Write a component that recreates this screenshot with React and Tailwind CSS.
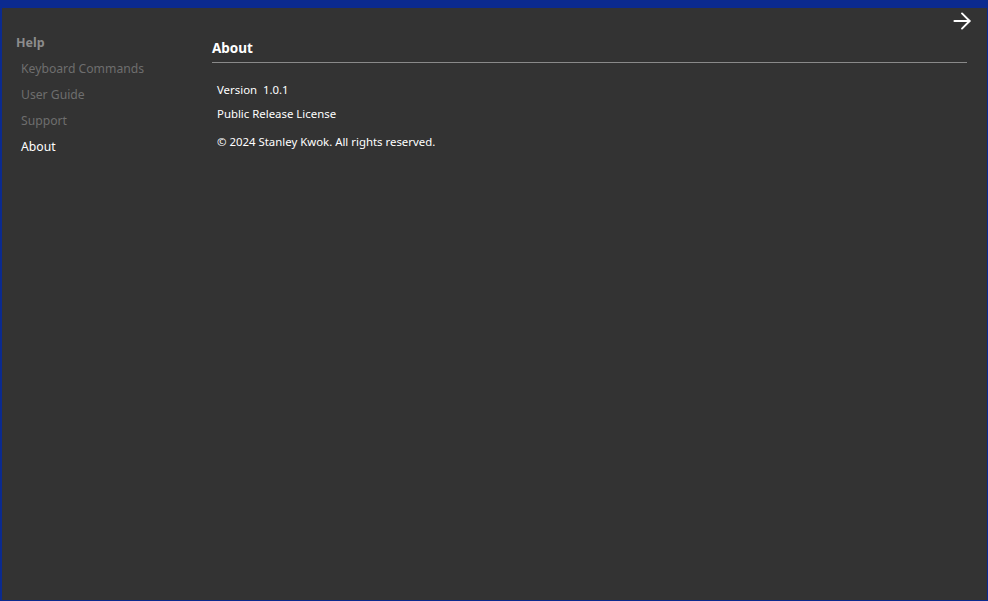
import React from 'react';
import { ArrowRight } from 'lucide-react';

export default function App() {
    const navItems = ["Keyboard Commands", "User Guide", "Support", "About"];
    const active = "About";

    return (
        <div className="w-[988px] h-[601px] bg-[#0b2a8f] pt-2 pl-[2px] pr-px pb-px" style={{ fontFamily: '"Segoe UI", "Noto Sans", sans-serif' }}>
            <div className="relative flex w-full h-full bg-[#333333]">
                {/* Close arrow */}
                <button className="absolute top-0 right-[12px] text-white">
                    <ArrowRight className="w-[26px] h-[26px]" strokeWidth={1.8} />
                </button>

                {/* Sidebar */}
                <aside className="w-[210px] pl-[14px] pt-[25px] shrink-0">
                    <div className="text-[12.5px] font-bold text-[#8c8c8c] leading-[20px]">Help</div>
                    <ul className="mt-[3px] pl-[5px] flex flex-col">
                        {navItems.map((item) => (
                            <li
                                key={item}
                                className={`text-[12.2px] leading-[26px] ${item === active ? 'text-white' : 'text-[#6e6e6e]'}`}
                            >
                                {item}
                            </li>
                        ))}
                    </ul>
                </aside>

                {/* Content */}
                <main className="flex-1 pt-[30px] pr-[20px]">
                    <h2 className="text-[13.5px] font-bold text-white leading-[20px]">About</h2>
                    <div className="mt-[4px] h-px bg-[#8a8a8a]" />
                    <div className="pl-[5px] pt-[17px] text-[11.4px] text-white">
                        <p className="leading-[20px]">Version&nbsp; 1.0.1</p>
                        <p className="leading-[20px] mt-[4px]">Public Release License</p>
                        <p className="leading-[20px] mt-[8px]">© 2024 Stanley Kwok. All rights reserved.</p>
                    </div>
                </main>
            </div>
        </div>
    );
}
